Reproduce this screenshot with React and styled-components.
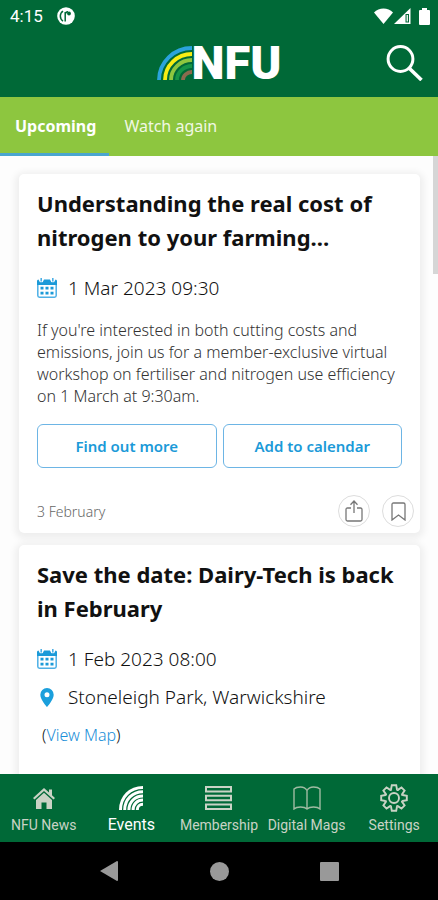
import React from "react";
import styled, { createGlobalStyle } from "styled-components";

const GlobalStyle = createGlobalStyle`
  * {
    box-sizing: border-box;
  }

  body {
    margin: 0;
    background: #fdfdfd;
    font-family: "Noto Sans", "Open Sans", sans-serif;
    color: #111;
  }

  button {
    font-family: inherit;
    cursor: pointer;
  }
`;

const Screen = styled.div`
  display: flex;
  flex-direction: column;
  height: 100vh;
`;

const TopArea = styled.header`
  background: #006937;
  color: white;
`;

const StatusBar = styled.div`
  display: flex;
  align-items: center;
  justify-content: space-between;
  height: 32px;
  padding: 0 8px 0 10px;
  font: 400 17px "Roboto", sans-serif;
`;

const StatusGroup = styled.div`
  display: flex;
  align-items: center;
  gap: ${(props) => props.$gap}px;
`;

const TitleBar = styled.div`
  display: grid;
  grid-template-columns: 1fr auto 1fr;
  align-items: center;
  height: 65px;
  padding: 0 15px 3px;
`;

const Logo = styled.div`
  grid-column: 2;
  display: flex;
  align-items: center;
  height: 34px;
`;

const LogoText = styled.span`
  font: 900 47px/34px "Roboto", sans-serif;
`;

const IconButton = styled.button`
  display: flex;
  justify-self: end;
  padding: 0;
  border: none;
  background: none;
`;

const Tabs = styled.nav`
  display: flex;
  height: 59px;
  background: #8dc63f;
`;

const Tab = styled.button`
  padding: 2px 13px 0 15px;
  border: none;
  border-bottom: 3px solid ${(props) => (props.$active ? "#4aa5cf" : "transparent")};
  background: none;
  color: ${(props) => (props.$active ? "white" : "#f1f8e4")};
  font-size: 16px;
  font-weight: ${(props) => (props.$active ? 700 : 400)};
`;

const Content = styled.main`
  position: relative;
  flex: 1;
  min-height: 0;
  overflow: hidden;
  display: flex;
  flex-direction: column;
  gap: 12px;
  padding: 18px 18px 0 19px;
`;

const ScrollThumb = styled.div`
  position: absolute;
  top: 0;
  right: 0;
  width: 5px;
  height: 118px;
  background: #d6d6d6;
`;

const Card = styled.article`
  flex: none;
  padding: 12px 18px 6px;
  border-radius: 5px;
  background: white;
  box-shadow: 0 2px 7px 4px rgba(0, 0, 0, 0.06);
`;

const CardTitle = styled.h2`
  margin: 0 0 18px;
  font-size: 22px;
  line-height: 34px;
  font-weight: 700;
`;

const InfoRow = styled.div`
  display: flex;
  align-items: center;
  gap: 11px;
  height: 32px;
  margin-bottom: 6px;
  font-size: 19px;
  font-weight: 300;
`;

const IconSlot = styled.span`
  display: flex;
  justify-content: center;
  width: 20px;
`;

const Description = styled.p`
  margin: 15px 0 17px;
  color: #333;
  font-size: 16px;
  line-height: 22px;
  font-weight: 300;
`;

const Actions = styled.div`
  display: flex;
  gap: 6px;
`;

const ActionButton = styled.button`
  flex: 1;
  height: 44px;
  border: 1px solid #6db5e5;
  border-radius: 6px;
  background: white;
  color: #1b9ad8;
  font-size: 15px;
  font-weight: 600;
`;

const CardFooter = styled.footer`
  display: flex;
  align-items: center;
  gap: 12px;
  margin: 27px -12px 0 0;
`;

const Published = styled.span`
  flex: 1;
  color: #666;
  font-size: 14px;
  font-weight: 300;
`;

const RoundButton = styled.button`
  display: flex;
  align-items: center;
  justify-content: center;
  width: 32px;
  height: 32px;
  padding: 0;
  border: 1px solid #ddd;
  border-radius: 50%;
  background: white;
`;

const MapLine = styled.div`
  padding: 4px 5px 40px;
  font-size: 16px;
  line-height: 24px;
  font-weight: 300;
`;

const MapLink = styled.a`
  color: #1b8fd8;
  text-decoration: none;
`;

const BottomNav = styled.nav`
  display: flex;
  justify-content: space-between;
  height: 68px;
  background: #006937;
`;

const NavItem = styled.button`
  flex: 1 0 20%;
  display: flex;
  flex-direction: column;
  align-items: center;
  justify-content: flex-end;
  gap: 3px;
  padding: 0 0 7px;
  border: none;
  background: none;
  color: ${(props) => (props.$active ? "white" : "#c9d3c5")};
  font: 400 ${(props) => (props.$active ? 16 : 14)}px/20px "Roboto", sans-serif;
  white-space: nowrap;
`;

const NavIcon = styled.span`
  display: flex;
  align-items: center;
  height: 28px;
`;

const SystemBar = styled.div`
  display: grid;
  grid-template-columns: repeat(3, 110px);
  justify-content: center;
  justify-items: center;
  align-items: center;
  height: 58px;
  background: black;
`;

const NoticeIcon = () => (
  <svg width="18" height="18" viewBox="0 0 18 18">
    <circle cx="9" cy="9" r="8.8" fill="white" />
    <path
      d="M6 4A6 6 0 0 0 6 14M8.2 14.500V5M8.200 7.500Q8.600 4.700 11 4.700"
      fill="none"
      stroke="#006937"
      strokeWidth="1.5"
    />
    <circle cx="12" cy="6.500" r="1.900" fill="#006937" />
  </svg>
);

const WifiIcon = () => (
  <svg width="19" height="16" viewBox="0 0 19 16">
    <path d="M9.5 16 0 4.4C5-.8 14-.8 19 4.4z" fill="white" />
  </svg>
);

const SignalIcon = () => (
  <svg width="17" height="16" viewBox="0 0 17 16">
    <path d="M0 16 16.5 0v16zM11.5 6v8.5H15V6z" fill="white" fillRule="evenodd" />
    <path d="M12.6 7h1.3v6.5h-1.3z" fill="white" />
  </svg>
);

const BatteryIcon = () => (
  <svg width="11" height="17" viewBox="0 0 11 17">
    <path d="M3 0h5v2h2q1 0 1 1v13q0 1-1 1H1q-1 0-1-1V3q0-1 1-1h2z" fill="white" />
  </svg>
);

const arcs = [
  { r: 32, color: "#2ba3dc" },
  { r: 26, color: "#f7ec13" },
  { r: 20, color: "#8dc63f" },
  { r: 14, color: "#159447" },
  { r: 8, color: "#8b6b4e" },
];

const Rainbow = () => (
  <svg width="35" height="34" viewBox="0 0 35 34">
    {arcs.map(({ r, color }) => (
      <path
        key={r}
        d={`M${34 - r} 34A${r + 1} ${r} 0 0 1 35 ${34 - r}`}
        fill="none"
        stroke={color}
        strokeWidth="3.8"
      />
    ))}
  </svg>
);

const SearchIcon = () => (
  <svg width="37" height="36" viewBox="0 0 37 36" fill="none" stroke="white">
    <circle cx="14.5" cy="14" r="12.4" strokeWidth="3" />
    <path d="m23 23 12.5 12" strokeWidth="3.6" />
  </svg>
);

const CalendarIcon = () => (
  <svg width="20" height="20" viewBox="0 0 20 20">
    <path
      d="M.8 5v12.500q0 1.700 1.700 1.700h15q1.700 0 1.700-1.700V5z"
      fill="white"
      stroke="#4db0e6"
      strokeWidth="1.5"
    />
    <path d="M0 7V3Q0 1.500 1.500 1.500L3 4.500h2.500L7 1.500h6l1.500 3H17l1.500-3Q20 1.500 20 3v4z" fill="#1b9ad8" />
    <path d="M4.200 0v3.500M15.800 0v3.500" stroke="#4db0e6" strokeWidth="1.6" />
    <path
      d="M3.500 8.800h3v2.800h-3zm5 0h3v2.800h-3zm5 0h3v2.800h-3zm-10 5h3v2.800h-3zm5 0h3v2.800h-3zm5 0h3v2.800h-3z"
      fill="#1b9ad8"
    />
  </svg>
);

const PinIcon = () => (
  <svg width="14" height="19" viewBox="0 0 14 19">
    <path
      d="M7 0A6.7 6.7 0 0 0 .3 6.7C.3 11.5 7 19 7 19s6.7-7.5 6.7-12.3A6.7 6.7 0 0 0 7 0zm0 4.300a2.500 2.500 0 1 1 0 5 2.500 2.500 0 0 1 0-5z"
      fill="#1b9fdc"
      fillRule="evenodd"
    />
  </svg>
);

const ShareIcon = () => (
  <svg width="18" height="22" viewBox="0 0 18 22" fill="none" stroke="#777" strokeWidth="1.3">
    <path d="M6 8H2.500Q1 8 1 9.500v10Q1 21 2.500 21h13q1.500 0 1.500-1.500v-10Q17 8 15.500 8H12M9 13V1.200M5.500 4.700 9 1l3.500 3.700" />
  </svg>
);

const BookmarkIcon = () => (
  <svg width="15" height="19" viewBox="0 0 15 19" fill="none" stroke="#777" strokeWidth="1.3">
    <path d="M1 18V2.500Q1 1 2.500 1h10Q14 1 14 2.500V18l-6.500-5z" />
  </svg>
);

const HomeIcon = () => (
  <svg width="22" height="21" viewBox="0 0 22 21" fill="#c9d3c5">
    <path d="M11 0 0 10l1.500 1.600L11 3l9.500 8.600L22 10l-3-2.700V1.500h-3v3z" />
    <path d="M11 4.800 3 12v9h5.500v-6.500h5V21H19v-9z" />
  </svg>
);

const EventsIcon = () => (
  <svg width="24" height="24" viewBox="0 0 24 24" fill="none" stroke="white" strokeWidth="3">
    <path d="M1.500 24C1.500 11 11 1.500 24 1.500M5.700 24C5.700 13.500 13.500 5.700 24 5.700M9.900 24C9.900 16 16 9.900 24 9.900M14.100 24c0-5.700 4.200-9.900 9.900-9.900M18.300 24c0-3.300 2.400-5.700 5.700-5.700" />
  </svg>
);

const MembershipIcon = () => (
  <svg width="27" height="24" viewBox="0 0 27 24" fill="none" stroke="#c9d3c5" strokeWidth="2">
    <path d="M1 1h25v4.500H1zM1 9.700h25v4.500H1zM1 18.500h25V23H1z" />
  </svg>
);

const BookIcon = () => (
  <svg width="28" height="24" viewBox="0 0 28 24" fill="none" stroke="#9fbba2" strokeWidth="1.4">
    <path d="M14 4.500Q12 1 7.500 1 3 1 1 3v20q2-2 6.500-2 4.500 0 6.500 2 2-2 6.500-2 4.500 0 6.500 2V3q-2-2-6.500-2Q16 1 14 4.500zM14 4.500V23" />
  </svg>
);

const teeth = [0, 45, 90, 135, 180, 225, 270, 315];

const GearIcon = () => (
  <svg width="28" height="28" viewBox="-14 -14 28 28">
    <g stroke="#c9d3c5" strokeWidth="1.9" fill="none">
      {teeth.map((angle) => (
        <path
          key={angle}
          d="M-3-8.500-2.200-12.800H2.200L3-8.500Q3.500-7.500 4.200-8.200"
          transform={`rotate(${angle})`}
        />
      ))}
      <circle r="5" />
    </g>
  </svg>
);

const navItems = [
  { label: "NFU News", icon: <HomeIcon /> },
  { label: "Events", icon: <EventsIcon />, active: true },
  { label: "Membership", icon: <MembershipIcon /> },
  { label: "Digital Mags", icon: <BookIcon /> },
  { label: "Settings", icon: <GearIcon /> },
];

const App = () => {
  return (
    <Screen>
      <GlobalStyle />
      <TopArea>
        <StatusBar>
          <StatusGroup $gap={14}>
            <span>4:15</span>
            <NoticeIcon />
          </StatusGroup>
          <StatusGroup $gap={8}>
            <StatusGroup $gap={1}>
              <WifiIcon />
              <SignalIcon />
            </StatusGroup>
            <BatteryIcon />
          </StatusGroup>
        </StatusBar>
        <TitleBar>
          <Logo>
            <Rainbow />
            <LogoText>NFU</LogoText>
          </Logo>
          <IconButton aria-label="Search">
            <SearchIcon />
          </IconButton>
        </TitleBar>
      </TopArea>
      <Tabs>
        <Tab $active>Upcoming</Tab>
        <Tab>Watch again</Tab>
      </Tabs>
      <Content>
        <Card>
          <CardTitle>Understanding the real cost of nitrogen to your farming…</CardTitle>
          <InfoRow>
            <IconSlot>
              <CalendarIcon />
            </IconSlot>
            1 Mar 2023 09:30
          </InfoRow>
          <Description>
            If you're interested in both cutting costs and emissions, join us for a
            member-exclusive virtual workshop on fertiliser and nitrogen use efficiency on 1
            March at 9:30am.
          </Description>
          <Actions>
            <ActionButton>Find out more</ActionButton>
            <ActionButton>Add to calendar</ActionButton>
          </Actions>
          <CardFooter>
            <Published>3 February</Published>
            <RoundButton aria-label="Share">
              <ShareIcon />
            </RoundButton>
            <RoundButton aria-label="Bookmark">
              <BookmarkIcon />
            </RoundButton>
          </CardFooter>
        </Card>
        <Card>
          <CardTitle>Save the date: Dairy-Tech is back in February</CardTitle>
          <InfoRow>
            <IconSlot>
              <CalendarIcon />
            </IconSlot>
            1 Feb 2023 08:00
          </InfoRow>
          <InfoRow>
            <IconSlot>
              <PinIcon />
            </IconSlot>
            Stoneleigh Park, Warwickshire
          </InfoRow>
          <MapLine>
            (<MapLink href="#map">View Map</MapLink>)
          </MapLine>
        </Card>
        <ScrollThumb />
      </Content>
      <BottomNav>
        {navItems.map((item) => (
          <NavItem key={item.label} $active={item.active}>
            <NavIcon>{item.icon}</NavIcon>
            {item.label}
          </NavItem>
        ))}
      </BottomNav>
      <SystemBar>
        <svg width="18" height="20" viewBox="0 0 18 20">
          <path d="M17 0q1 0 1 1v18q0 1-1 1L0 10z" fill="#999" />
        </svg>
        <svg width="19" height="19" viewBox="0 0 19 19">
          <circle cx="9.5" cy="9.5" r="9.5" fill="#999" />
        </svg>
        <svg width="19" height="19" viewBox="0 0 19 19">
          <rect width="19" height="19" rx="1" fill="#999" />
        </svg>
      </SystemBar>
    </Screen>
  );
};

export default App;
